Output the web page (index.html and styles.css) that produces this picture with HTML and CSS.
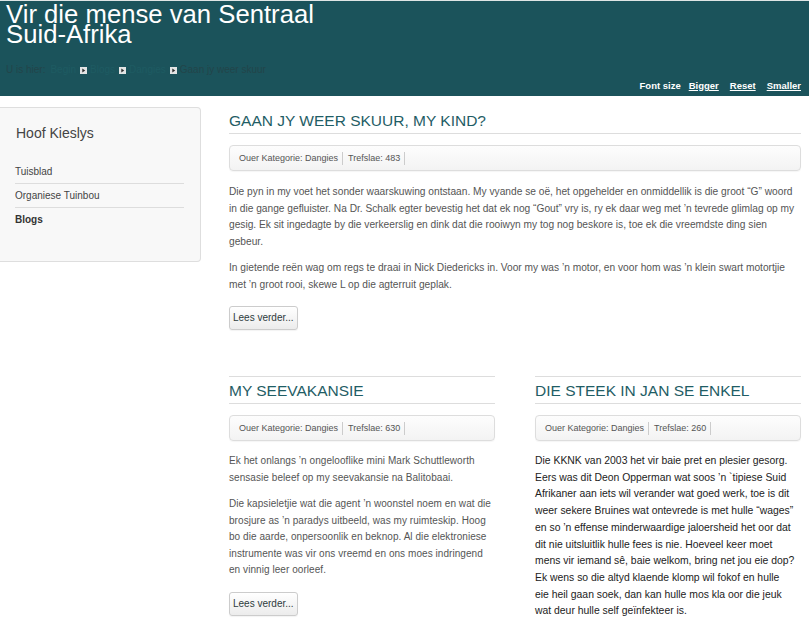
FILE: index.html
```html
<!DOCTYPE html>
<html lang="af">
<head>
<meta charset="utf-8">
<title>Vir die mense van Sentraal Suid-Afrika</title>
<link rel="stylesheet" href="styles.css">
</head>
<body>
<header class="header">
  <h1 class="site-title">Vir die mense van Sentraal Suid-Afrika</h1>
  <div class="breadcrumbs">
    <span class="bc-label">U is hier:</span><a class="bc-link" href="#">Begin</a><svg class="bc-arrow" width="7" height="7" viewBox="0 0 7 7"><rect width="7" height="7" fill="#e2e4e4"/><polygon points="2.3,1.5 5.2,3.5 2.3,5.5" fill="#2b2b2b"/></svg><a class="bc-link" href="#">Blogs</a><svg class="bc-arrow" width="7" height="7" viewBox="0 0 7 7"><rect width="7" height="7" fill="#e2e4e4"/><polygon points="2.3,1.5 5.2,3.5 2.3,5.5" fill="#2b2b2b"/></svg><a class="bc-link" href="#">Dangies</a><svg class="bc-arrow" width="7" height="7" viewBox="0 0 7 7"><rect width="7" height="7" fill="#e2e4e4"/><polygon points="2.3,1.5 5.2,3.5 2.3,5.5" fill="#2b2b2b"/></svg><span class="bc-current">Gaan jy weer skuur</span>
  </div>
  <div class="fontsize">
    <span class="fs-label">Font size</span>
    <a class="fs-link" href="#">Bigger</a>
    <a class="fs-link" href="#">Reset</a>
    <a class="fs-link" href="#">Smaller</a>
  </div>
</header>

<div class="page">
  <aside class="sidebar">
    <h3 class="sidebar-title">Hoof Kieslys</h3>
    <ul class="menu">
      <li><a href="#">Tuisblad</a></li>
      <li><a href="#">Organiese Tuinbou</a></li>
      <li class="active"><a href="#">Blogs</a></li>
    </ul>
  </aside>

  <main class="content">
    <article class="lead">
      <h2 class="item-title">GAAN JY WEER SKUUR, MY KIND?</h2>
      <div class="info">
        <span class="info-item">Ouer Kategorie: Dangies</span>
        <span class="info-item">Trefslae: 483</span>
      </div>
      <p>Die pyn in my voet het sonder waarskuwing ontstaan. My vyande se oë, het opgehelder en onmiddellik is die groot “G” woord in die gange gefluister. Na Dr. Schalk egter bevestig het dat ek nog “Gout” vry is, ry ek daar weg met ’n tevrede glimlag op my gesig. Ek sit ingedagte by die verkeerslig en dink dat die rooiwyn my tog nog beskore is, toe ek die vreemdste ding sien gebeur.</p>
      <p>In gietende reën wag om regs te draai in Nick Diedericks in. Voor my was ’n motor, en voor hom was ’n klein swart motortjie met ’n groot rooi, skewe L op die agterruit geplak.</p>
      <div class="readmore"><a class="btn" href="#">Lees verder...</a></div>
    </article>

    <div class="columns">
      <article class="item">
        <h2 class="item-title">MY SEEVAKANSIE</h2>
        <div class="info">
          <span class="info-item">Ouer Kategorie: Dangies</span>
          <span class="info-item">Trefslae: 630</span>
        </div>
        <p>Ek het onlangs ’n ongelooflike mini Mark Schuttleworth sensasie beleef op my seevakansie na Balitobaai.</p>
        <p>Die kapsieletjie wat die agent ’n woonstel noem en wat die brosjure as ’n paradys uitbeeld, was my ruimteskip. Hoog bo die aarde, onpersoonlik en beknop. Al die elektroniese instrumente was vir ons vreemd en ons moes indringend en vinnig leer oorleef.</p>
        <div class="readmore"><a class="btn" href="#">Lees verder...</a></div>
      </article>

      <article class="item">
        <h2 class="item-title">DIE STEEK IN JAN SE ENKEL</h2>
        <div class="info">
          <span class="info-item">Ouer Kategorie: Dangies</span>
          <span class="info-item">Trefslae: 260</span>
        </div>
        <div class="text-dark">Die KKNK van 2003 het vir baie pret en plesier gesorg. Eers was dit Deon Opperman wat soos ’n `tipiese Suid Afrikaner aan iets wil verander wat goed werk, toe is dit weer sekere Bruines wat ontevrede is met hulle “wages” en so ’n effense minderwaardige jaloersheid het oor dat dit nie uitsluitlik hulle fees is nie. Hoeveel keer moet mens vir iemand sê, baie welkom, bring net jou eie dop? Ek wens so die altyd klaende klomp wil fokof en hulle eie&nbsp;heil gaan soek, dan kan hulle mos kla oor die jeuk wat deur hulle self geïnfekteer is.</div>
      </article>
    </div>
  </main>
</div>
</body>
</html>
```

FILE: styles.css
```css
* { box-sizing: border-box; }

body {
  margin: 0;
  background: #ffffff;
  font-family: "Liberation Sans", Arial, Helvetica, sans-serif;
  font-size: 10px;
  color: #555555;
}

a { text-decoration: none; color: inherit; }

/* Header */
.header {
  background: #1b535b;
  border-top: 1px solid #dfe5e5;
  padding: 3px 8px 4px 6px;
}

.site-title {
  margin: 0;
  max-width: 330px;
  font-size: 25.7px;
  font-weight: normal;
  line-height: 20px;
  color: #ffffff;
}

.breadcrumbs {
  margin-top: 20px;
  height: 12px;
  line-height: 12px;
  font-size: 10px;
  display: flex;
  align-items: center;
}

.bc-label {
  color: #22454a;
  margin-right: 5px;
}

.bc-link { color: #1e5b62; }

.bc-arrow {
  display: block;
  margin: 0 3px 0 4px;
  flex: none;
}

.bc-current { color: #22454a; }

.fontsize {
  margin-top: 4px;
  height: 12px;
  line-height: 12px;
  display: flex;
  justify-content: flex-end;
  gap: 11px;
  font-size: 9.5px;
  font-weight: bold;
  color: #ffffff;
}

.fs-label { margin-right: -3px; }

.fs-link {
  color: #ffffff;
  text-decoration: underline;
}

/* Page layout */
.page {
  display: flex;
  align-items: flex-start;
  gap: 28px;
  padding: 11px 8px 0 0;
}

/* Sidebar */
.sidebar {
  flex: none;
  width: 201px;
  background: #f8f8f8;
  border: 1px solid #dedede;
  border-left: none;
  border-radius: 0 4px 4px 0;
  padding: 17px 16px 15px 15px;
}

.sidebar-title {
  margin: 0;
  padding-left: 1px;
  font-size: 14px;
  font-weight: normal;
  line-height: 17px;
  color: #444444;
}

.menu {
  list-style: none;
  margin: 18px 0 15px;
  padding: 0;
}

.menu li {
  padding: 6px 0 5px;
  line-height: 12px;
  border-bottom: 1px solid #dddddd;
  color: #444444;
}

.menu li:last-child { border-bottom: none; }

.menu li.active { font-weight: bold; color: #333333; }

/* Content */
.content {
  flex: 1;
  min-width: 0;
}

.item-title {
  margin: 0;
  padding: 4px 0 2px;
  font-size: 15.5px;
  font-weight: normal;
  line-height: 20px;
  color: #1f5d65;
  border-bottom: 1px solid #dddddd;
}

.item .item-title { border-top: 1px solid #dddddd; }

.info {
  display: flex;
  margin: 11px 0 12px;
  padding: 6px 9px 5px;
  border: 1px solid #dddddd;
  border-radius: 4px;
  background: linear-gradient(#fdfdfd, #f3f3f3);
  box-shadow: 0 1px 1px rgba(0, 0, 0, 0.04);
  font-size: 9px;
  color: #555555;
}

.info-item {
  line-height: 13px;
  padding-right: 4px;
  margin-right: 5px;
  border-right: 1px solid #cccccc;
}

.content p {
  margin: 0 0 10px;
  line-height: 16.5px;
  color: #555555;
}

.lead p {
  font-size: 10.2px;
}

.lead .info { margin-bottom: 13px; }

.item p {
  letter-spacing: 0.06px;
}

.readmore { padding-top: 3px; }

.btn {
  display: inline-block;
  padding: 5px 3px;
  line-height: 12px;
  font-size: 10px;
  color: #2d3b3d;
  border: 1px solid #cccccc;
  border-radius: 3px;
  background: linear-gradient(#ffffff, #ececec);
  box-shadow: 0 1px 1px rgba(0, 0, 0, 0.05);
}

.columns {
  margin-top: 46px;
  display: grid;
  grid-template-columns: 1fr 1fr;
  gap: 40px;
}

.text-dark {
  font-size: 10.4px;
  line-height: 16.7px;
  color: #222222;
  padding-right: 1px;
}
```
